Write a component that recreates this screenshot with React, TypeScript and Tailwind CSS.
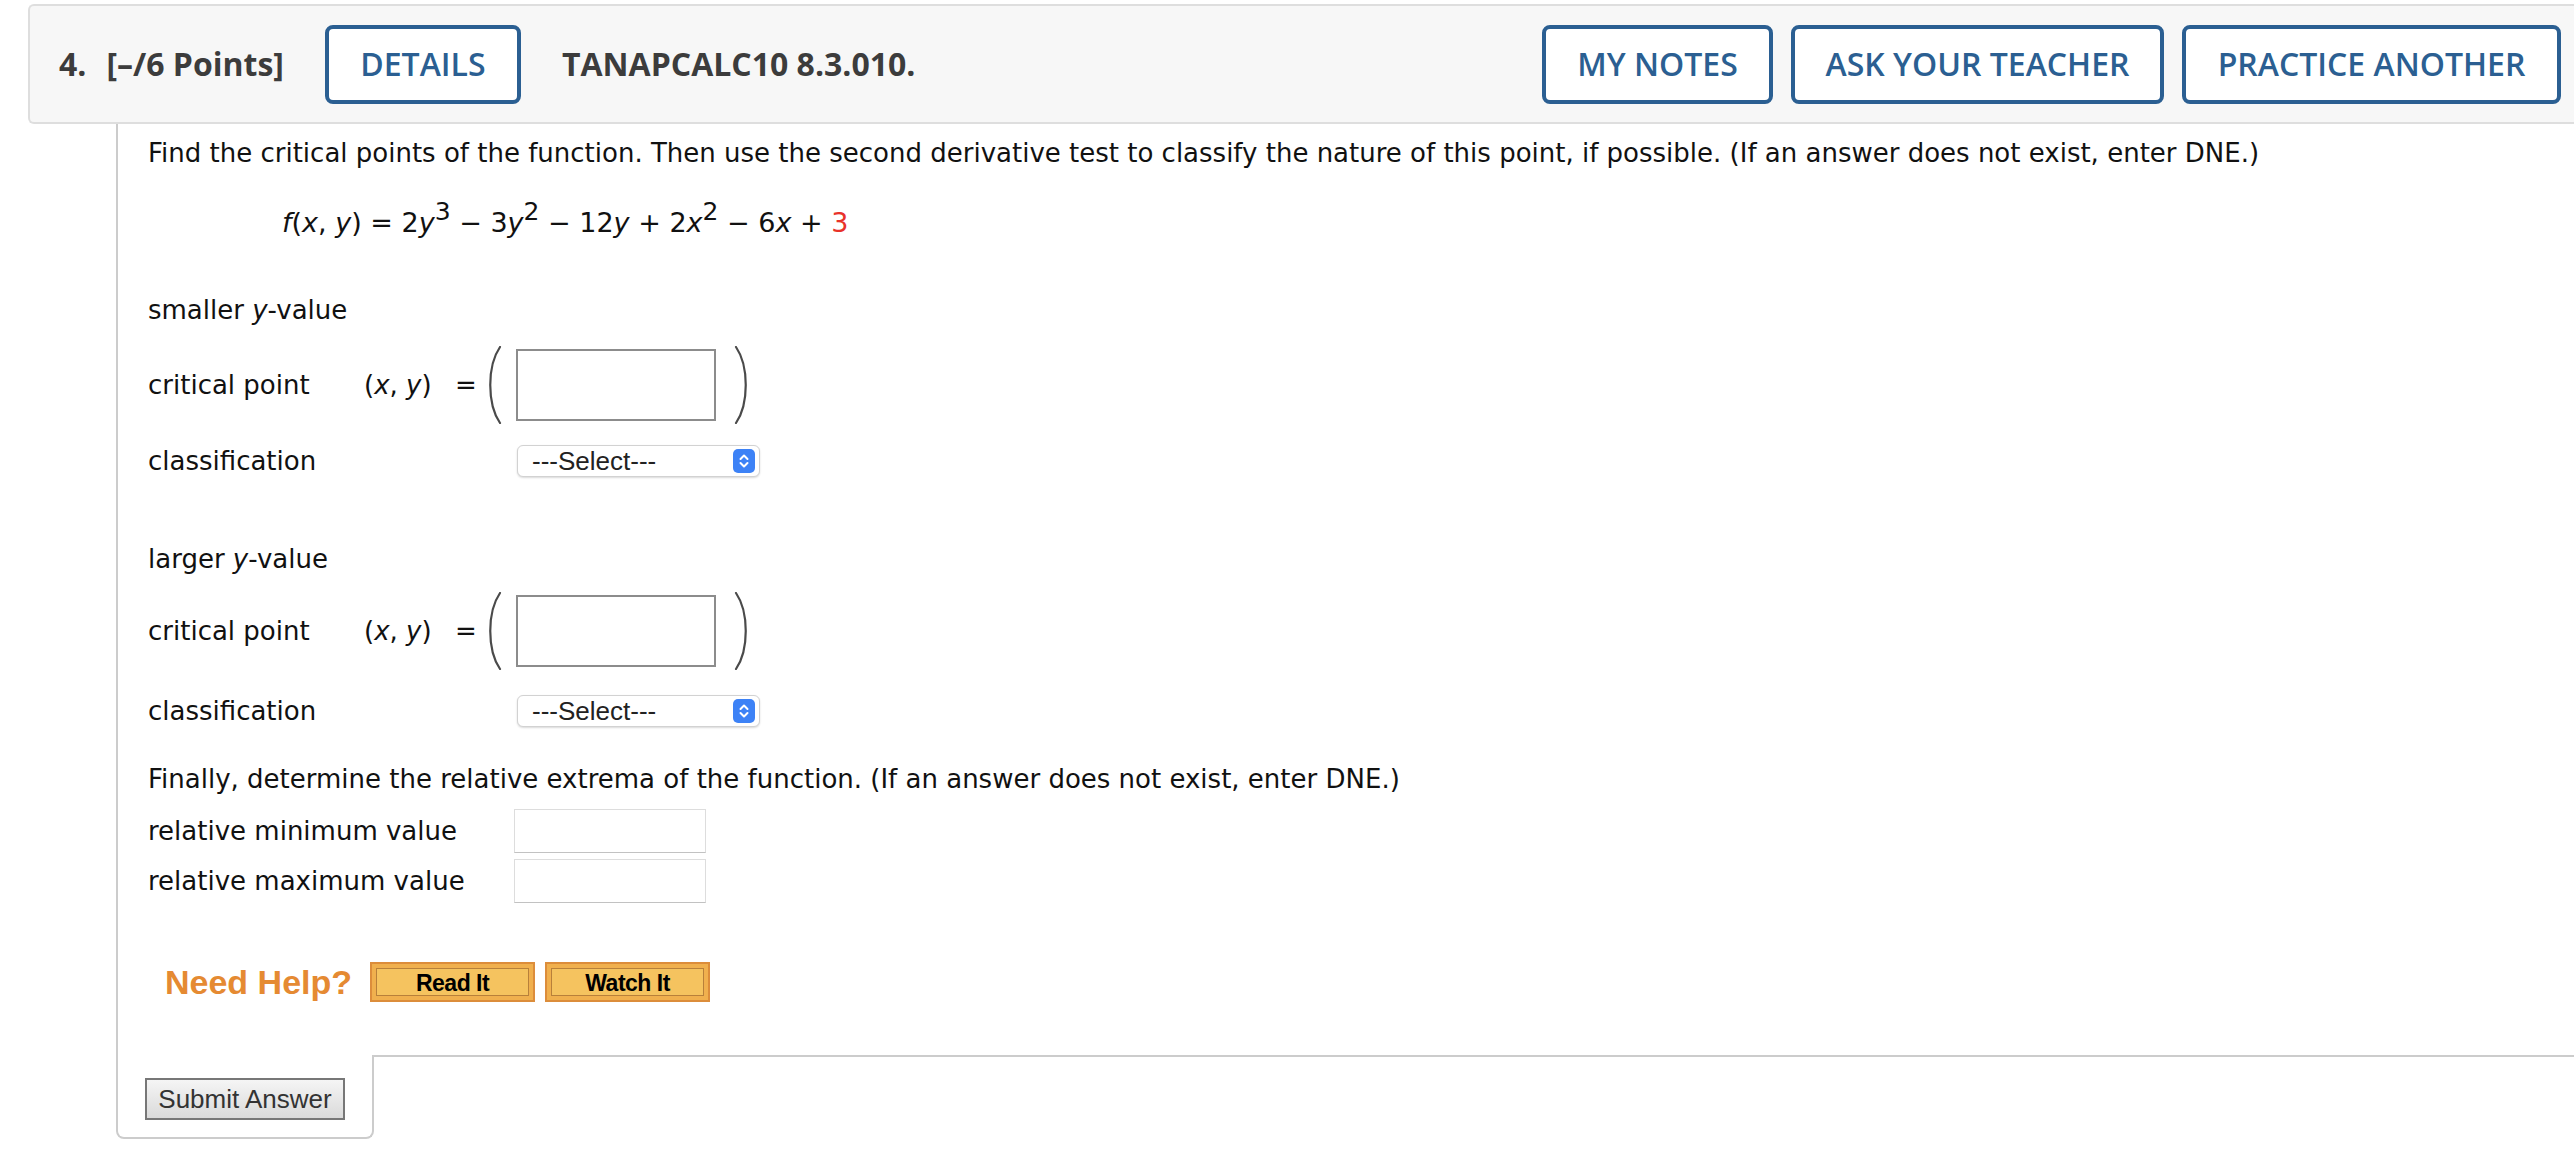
import React from 'react';

// big stretched parenthesis used around the answer box
const Paren = ({ side }: { side: 'left' | 'right' }) => (
  <svg width="22" height="78" viewBox="0 0 22 78" className="shrink-0">
    <path
      d={side === 'left' ? 'M18 1 C5 20, 5 58, 18 77' : 'M4 1 C17 20, 17 58, 4 77'}
      fill="none"
      stroke="#4a4a4a"
      strokeWidth="2.2"
      strokeLinecap="round"
    />
  </svg>
);

const SelectBox = () => (
  <div className="w-[243px] h-[32px] rounded-[6px] border border-[#d2d2d2] bg-white shadow-[0_1px_2px_rgba(0,0,0,0.15)] flex items-center justify-between pl-[14px] pr-[4px] font-['Liberation_Sans',sans-serif] text-[26px] text-[#222]">
    <span>---Select---</span>
    <span className="w-[22px] h-[24px] rounded-[5px] bg-[#3d82f6] flex items-center justify-center">
      <svg width="14" height="18" viewBox="0 0 14 18">
        <path d="M3.5 7 L7 3.5 L10.5 7" fill="none" stroke="#fff" strokeWidth="2" strokeLinecap="round" strokeLinejoin="round" />
        <path d="M3.5 11 L7 14.5 L10.5 11" fill="none" stroke="#fff" strokeWidth="2" strokeLinecap="round" strokeLinejoin="round" />
      </svg>
    </span>
  </div>
);

const CriticalRow = () => (
  <div className="flex items-center h-[76px]">
    <span className="w-[216px] shrink-0">critical point</span>
    <span className="w-[91px] shrink-0">
      (<i>x</i>, <i>y</i>)
    </span>
    <span className="w-[27px] shrink-0">=</span>
    <Paren side="left" />
    <div className="ml-[12px] w-[200px] h-[72px] border-2 border-[#8c8c8c] bg-white shrink-0" />
    <span className="ml-[16px]">
      <Paren side="right" />
    </span>
  </div>
);

const ClassRow = ({ className = '' }: { className?: string }) => (
  <div className={`flex items-center h-[32px] ${className}`}>
    <span className="w-[369px] shrink-0">classification</span>
    <SelectBox />
  </div>
);

const HelpButton = ({ label }: { label: string }) => (
  <div className="w-[165px] h-[40px] border-2 border-[#dc8d3b] bg-[#f0b04e] p-[4px] shrink-0">
    <div className="h-full border border-[#b8803a] bg-[#f5c35f] flex items-center justify-center pt-[2px] font-['Liberation_Sans',sans-serif] font-bold text-[23px] text-black tracking-[-0.5px]">
      {label}
    </div>
  </div>
);

const HeaderButton = ({ label, w }: { label: string; w: string }) => (
  <div className={`${w} h-[79px] rounded-[8px] border-4 border-[#2b5f92] bg-white flex items-center justify-center text-[#2b5f92] font-semibold shrink-0`}>
    {label}
  </div>
);

export default function App() {
  return (
    <div className="w-full h-[1172px] overflow-hidden bg-white">
      {/* question header */}
      <div className="ml-[28px] mt-[4px] h-[120px] flex items-center border-2 border-r-0 border-[#dedede] rounded-l-[6px] bg-[#f7f7f7] font-['Open_Sans',sans-serif] text-[32px]">
        <span className="ml-[29px] font-bold text-[#3c3c3c]">4.</span>
        <span className="ml-[20px] font-bold text-[#3c3c3c]">[–/6 Points]</span>
        <div className="ml-[41px]">
          <HeaderButton label="DETAILS" w="w-[196px]" />
        </div>
        <span className="ml-[41px] font-bold text-[#3c3c3c]">TANAPCALC10 8.3.010.</span>
        <div className="flex-1" />
        <div className="flex gap-[18px] pr-[13px]">
          <HeaderButton label="MY NOTES" w="w-[231px]" />
          <HeaderButton label="ASK YOUR TEACHER" w="w-[373px]" />
          <HeaderButton label="PRACTICE ANOTHER" w="w-[379px]" />
        </div>
      </div>

      <div className="ml-[116px] font-['DejaVu_Sans',sans-serif] text-[26px] leading-[32px] text-[#111]">
        <div className="border-l-2 border-[#cccccc] pl-[30px] pt-[13px] pb-[53px]">
          <p>
            Find the critical points of the function. Then use the second derivative test to classify the nature of this point, if possible. (If an answer does not exist, enter DNE.)
          </p>

          <p className="mt-[38px] ml-[134px] text-[27px] h-[32px]">
            <i>f</i>(<i>x</i>, <i>y</i>) = 2<i>y</i>
            <sup className="text-[25px] leading-none">3</sup> − 3<i>y</i>
            <sup className="text-[25px] leading-none">2</sup> − 12<i>y</i> + 2<i>x</i>
            <sup className="text-[25px] leading-none">2</sup> − 6<i>x</i> + <span className="text-[#e8322a]">3</span>
          </p>

          <p className="mt-[55px]">
            smaller <i>y</i>-value
          </p>
          <div className="mt-[21px]">
            <CriticalRow />
          </div>
          <ClassRow className="mt-[22px]" />

          <p className="mt-[66px]">
            larger <i>y</i>-value
          </p>
          <div className="mt-[18px]">
            <CriticalRow />
          </div>
          <ClassRow className="mt-[26px]" />

          <p className="mt-[36px]">
            Finally, determine the relative extrema of the function. (If an answer does not exist, enter DNE.)
          </p>
          <div className="mt-[14px] flex items-center h-[44px]">
            <span className="w-[366px] shrink-0">relative minimum value</span>
            <div className="w-[192px] h-[44px] border border-[#dddddd] border-b-[#c2c2c2] bg-white" />
          </div>
          <div className="mt-[6px] flex items-center h-[44px]">
            <span className="w-[366px] shrink-0">relative maximum value</span>
            <div className="w-[192px] h-[44px] border border-[#dddddd] border-b-[#c2c2c2] bg-white" />
          </div>

          <div className="mt-[59px] flex items-center h-[40px]">
            <span className="ml-[17px] font-['Liberation_Sans',sans-serif] font-bold text-[34px] text-[#e58a32]">Need Help?</span>
            <div className="ml-[18px]">
              <HelpButton label="Read It" />
            </div>
            <div className="ml-[10px]">
              <HelpButton label="Watch It" />
            </div>
          </div>
        </div>

        {/* submit tab */}
        <div className="flex">
          <div className="w-[258px] h-[84px] border-l-2 border-r-2 border-b-2 border-[#cccccc] rounded-b-[8px] pl-[27px] pt-[23px] shrink-0">
            <div className="w-[200px] h-[42px] border-2 border-[#777777] bg-gradient-to-b from-[#f5f5f5] to-[#dadada] flex items-center justify-center font-['Liberation_Sans',sans-serif] text-[26px] text-[#333]">
              Submit Answer
            </div>
          </div>
          <div className="flex-1 border-t-2 border-[#cccccc]" />
        </div>
      </div>
    </div>
  );
}
